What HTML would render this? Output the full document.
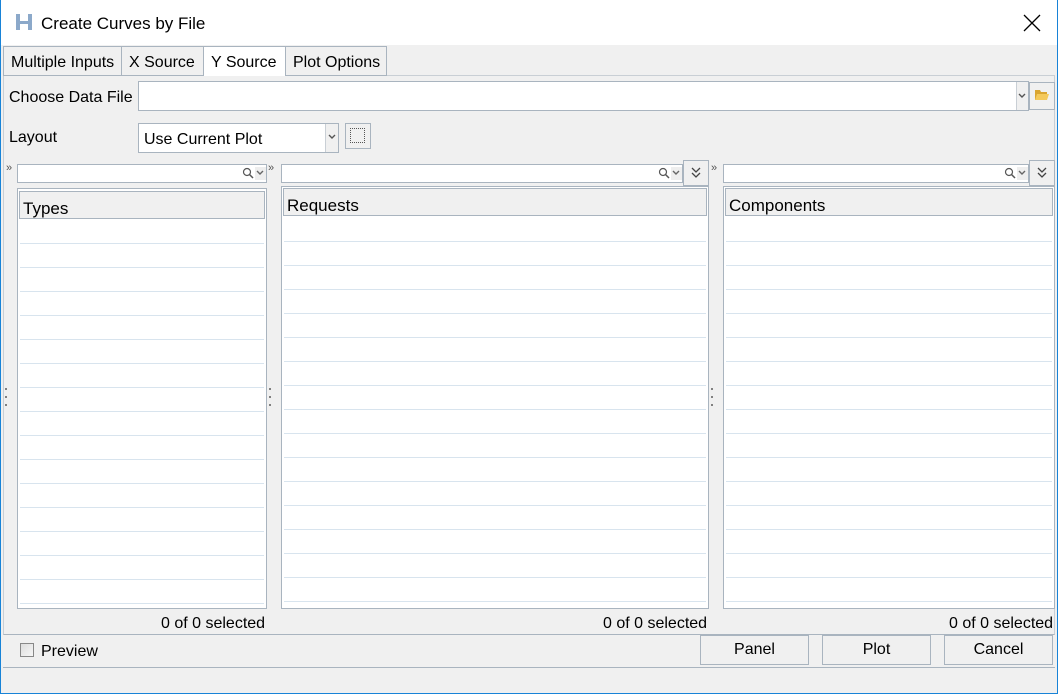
<!DOCTYPE html>
<html><head><style>
*{box-sizing:border-box;margin:0;padding:0}
body{width:1058px;height:694px;position:relative;background:#f0f0f0;font-family:"Liberation Sans",sans-serif;font-size:16px;color:#000;overflow:hidden}
.a{position:absolute}
.bd{border:1px solid #a9b4bf}
.wh{background:#fff}
.list{background:#fff;border:1px solid #a9b4bf;overflow:hidden}
.hdr{position:absolute;left:1px;right:1px;top:1px;height:28px;background:#f0f0f0;border:1px solid #a9b4bf;font-size:17px;padding:7px 0 0 3px}
.rows{position:absolute;left:2px;right:2px;bottom:0;background:repeating-linear-gradient(to bottom,#fff 0,#fff 23px,#d8e4ee 23px,#d8e4ee 24px)}
.btn{position:absolute;border:1px solid #a9b4bf;background:#f0f0f0;text-align:center;line-height:28px}
.dots{position:absolute;width:2px;height:2px;background:#808080;box-shadow:0 8px #808080,0 16px #808080}
</style></head><body>
<div class="a" style="left:0;top:0;width:1058px;height:694px;border:1px solid #1883d7;border-top:none"></div>
<div class="a" style="left:1px;top:0;width:1056px;height:45px;background:#fff"></div>
<svg class="a" style="left:14px;top:12px" width="20" height="20"><path d="M2 2h4v16h-4z M14 2h4v16h-4z M5 9h10v3h-10z" fill="#6f93bd" opacity=".8"/></svg>
<div class="a" style="left:41px;top:14px;font-size:17px">Create Curves by File</div>
<svg class="a" style="left:1023px;top:14px" width="18" height="18"><path d="M1 1L17 17M17 1L1 17" stroke="#000" stroke-width="1.3"/></svg>
<div class="a" style="left:3px;top:75px;width:1052px;height:560px;border:1px solid #c9cfd5;border-bottom:1px solid #a9b4bf"></div>
<div class="a bd" style="left:3px;top:46px;width:119px;height:30px;background:#f0f0f0;padding:7px 0 0 7px">Multiple Inputs</div>
<div class="a bd" style="left:121px;top:46px;width:83px;height:30px;background:#f0f0f0;padding:7px 0 0 7px">X Source</div>
<div class="a bd" style="left:203px;top:46px;width:83px;height:30px;background:#fff;border-bottom:none;padding:7px 0 0 7px">Y Source</div>
<div class="a bd" style="left:285px;top:46px;width:102px;height:30px;background:#f0f0f0;padding:7px 0 0 7px">Plot Options</div>
<div class="a" style="left:9px;top:89px">Choose Data File</div>
<div class="a bd wh" style="left:138px;top:81px;width:891px;height:30px"></div>
<div class="a" style="left:1016px;top:82px;width:12px;height:28px;background:#f0f0f0;border-left:1px solid #c9cfd5"></div>
<svg class="a" style="left:1018px;top:93px" width="8" height="6"><path d="M1 1l3 3 3-3" fill="none" stroke="#555" stroke-width="1.4"/></svg>
<div class="a bd" style="left:1029px;top:82px;width:26px;height:28px;background:#f0f0f0"></div>
<svg class="a" style="left:1034px;top:88px" width="16" height="14"><path d="M1 2h5l1 2h6v8H1z" fill="#d9a531"/><path d="M3 6h12l-2 6H1z" fill="#f4c95b"/></svg>
<div class="a" style="left:9px;top:129px">Layout</div>
<div class="a bd wh" style="left:138px;top:123px;width:201px;height:30px;padding:7px 0 0 5px">Use Current Plot</div>
<div class="a" style="left:325px;top:124px;width:13px;height:28px;background:#f0f0f0;border-left:1px solid #c9cfd5"></div>
<svg class="a" style="left:328px;top:134px" width="8" height="6"><path d="M1 1l3 3 3-3" fill="none" stroke="#555" stroke-width="1.4"/></svg>
<div class="a bd" style="left:345px;top:123px;width:26px;height:26px"></div>
<div class="a" style="left:350px;top:128px;width:15px;height:15px;border:1px dotted #555"></div>
<div class="a" style="left:6px;top:162px;font-size:11px;color:#555">»</div>
<div class="a bd wh" style="left:17px;top:164px;width:250px;height:19px"></div>
<div class="a" style="left:268px;top:162px;font-size:11px;color:#555">»</div>
<div class="a bd wh" style="left:281px;top:164px;width:402px;height:19px"></div>
<div class="btn" style="left:683px;top:160px;width:26px;height:26px"></div>
<svg class="a" style="left:691px;top:167px" width="10" height="12"><path d="M1 1l4 4 4-4M1 6l4 4 4-4" fill="none" stroke="#444" stroke-width="1.3"/></svg>
<div class="a" style="left:711px;top:162px;font-size:11px;color:#555">»</div>
<div class="a bd wh" style="left:723px;top:164px;width:306px;height:19px"></div>
<div class="btn" style="left:1029px;top:160px;width:26px;height:26px"></div>
<svg class="a" style="left:1037px;top:167px" width="10" height="12"><path d="M1 1l4 4 4-4M1 6l4 4 4-4" fill="none" stroke="#444" stroke-width="1.3"/></svg>
<svg class="a" style="left:242px;top:167px" width="25" height="13"><circle cx="5" cy="5" r="3.5" fill="none" stroke="#555" stroke-width="1.2"/><path d="M7.5 7.5L11 11" stroke="#555" stroke-width="1.5"/><rect x="13" y="0" width="11" height="13" fill="#eee"/><path d="M15 4l3 3 3-3" fill="none" stroke="#666" stroke-width="1.4"/></svg>
<svg class="a" style="left:658px;top:167px" width="25" height="13"><circle cx="5" cy="5" r="3.5" fill="none" stroke="#555" stroke-width="1.2"/><path d="M7.5 7.5L11 11" stroke="#555" stroke-width="1.5"/><rect x="13" y="0" width="11" height="13" fill="#eee"/><path d="M15 4l3 3 3-3" fill="none" stroke="#666" stroke-width="1.4"/></svg>
<svg class="a" style="left:1004px;top:167px" width="25" height="13"><circle cx="5" cy="5" r="3.5" fill="none" stroke="#555" stroke-width="1.2"/><path d="M7.5 7.5L11 11" stroke="#555" stroke-width="1.5"/><rect x="13" y="0" width="11" height="13" fill="#eee"/><path d="M15 4l3 3 3-3" fill="none" stroke="#666" stroke-width="1.4"/></svg>
<div class="a list" style="left:17px;top:188px;width:250px;height:421px"><div class="hdr" style="top:2px">Types</div><div class="rows" style="top:31px"></div></div>
<div class="a list" style="left:281px;top:186px;width:428px;height:423px"><div class="hdr">Requests</div><div class="rows" style="top:31px"></div></div>
<div class="a list" style="left:723px;top:186px;width:332px;height:423px"><div class="hdr">Components</div><div class="rows" style="top:31px"></div></div>
<div class="dots" style="left:5px;top:388px"></div>
<div class="dots" style="left:269px;top:388px"></div>
<div class="dots" style="left:711px;top:388px"></div>
<div class="a" style="left:161px;top:615px">0 of 0 selected</div>
<div class="a" style="left:603px;top:615px">0 of 0 selected</div>
<div class="a" style="left:949px;top:615px">0 of 0 selected</div>
<div class="a" style="left:20px;top:643px;width:14px;height:14px;border:1px solid #888;background:linear-gradient(135deg,#ddd,#f6f6f6)"></div>
<div class="a" style="left:41px;top:643px">Preview</div>
<div class="btn" style="left:700px;top:635px;width:109px;height:30px">Panel</div>
<div class="btn" style="left:822px;top:635px;width:109px;height:30px">Plot</div>
<div class="btn" style="left:944px;top:635px;width:109px;height:30px">Cancel</div>
<div class="a" style="left:3px;top:667px;width:1052px;height:1px;background:#a9b4bf"></div>
</body></html>
